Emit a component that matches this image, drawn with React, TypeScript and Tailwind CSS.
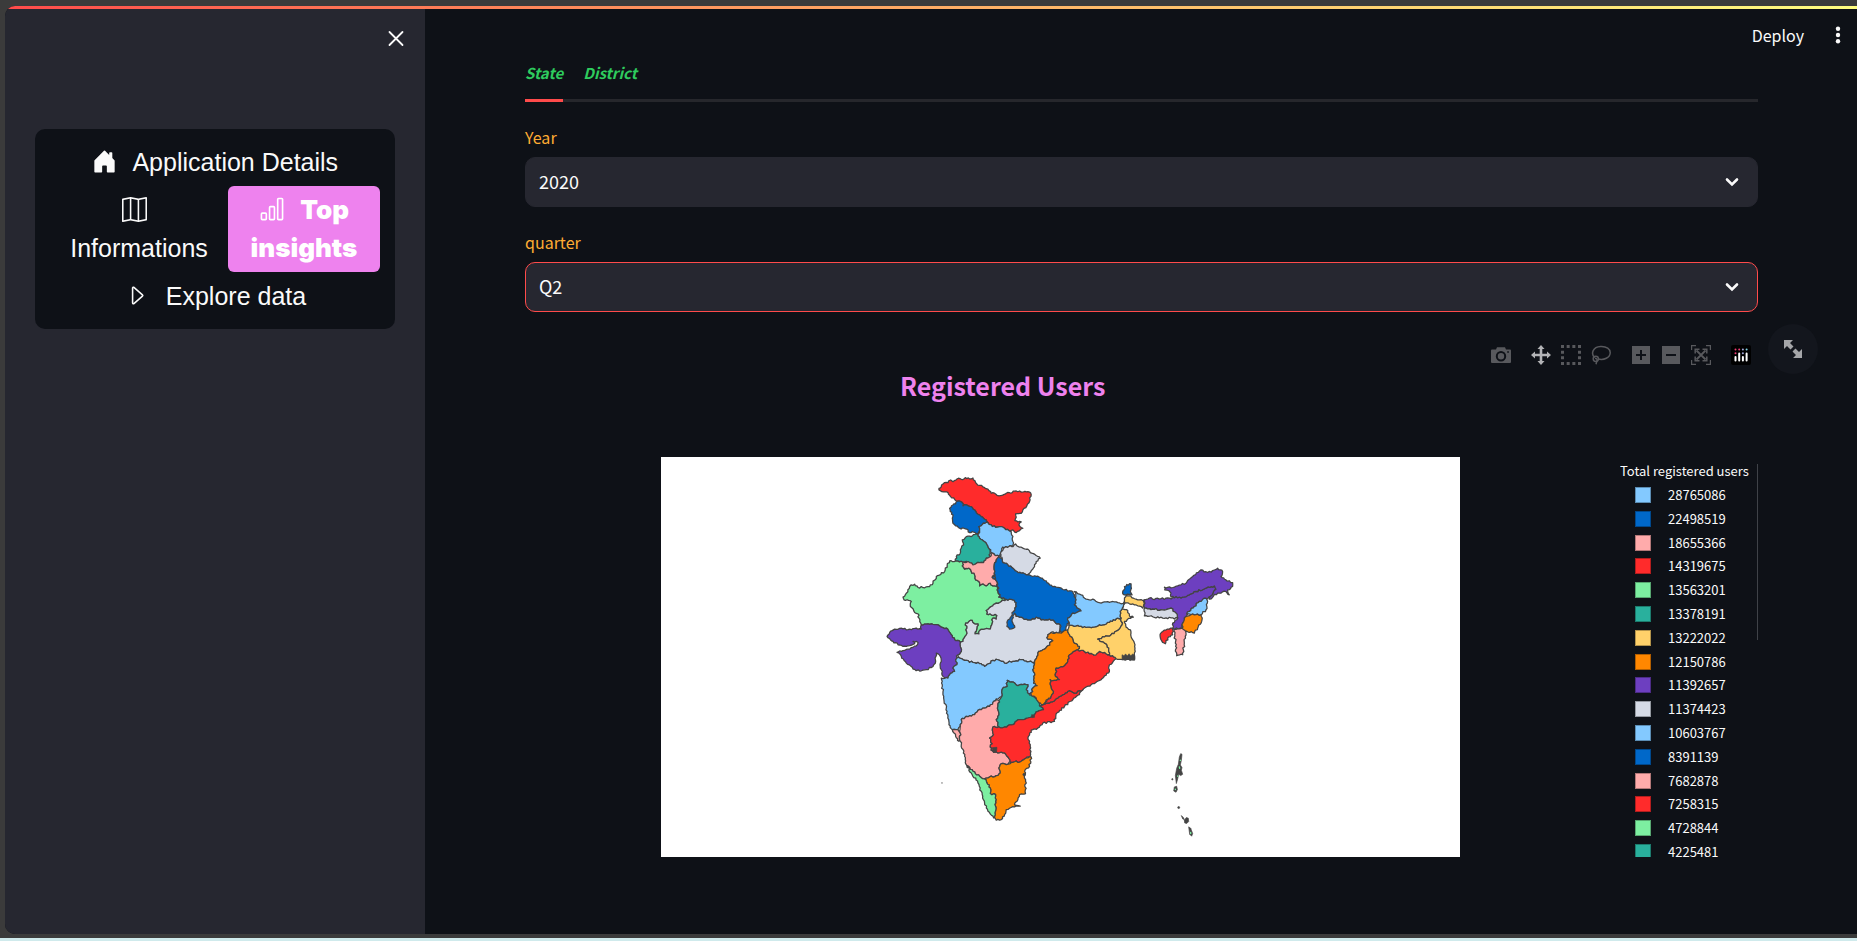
import React from "react";
import { BsBarChart, BsCaretRight, BsHouseDoorFill, BsMap } from "react-icons/bs";

const SKY = "#83c9ff";
const BLUE = "#0068c9";
const ROSE = "#ffabab";
const RED = "#ff2b2b";
const MINT = "#7defa1";
const TEAL = "#29b09d";
const SAND = "#ffd16a";
const ORANGE = "#ff8700";
const PURPLE = "#6d3fc0";
const GREY = "#d5dae5";

const legend: [string, string][] = [
  ["28765086", SKY],
  ["22498519", BLUE],
  ["18655366", ROSE],
  ["14319675", RED],
  ["13563201", MINT],
  ["13378191", TEAL],
  ["13222022", SAND],
  ["12150786", ORANGE],
  ["11392657", PURPLE],
  ["11374423", GREY],
  ["10603767", SKY],
  ["8391139", BLUE],
  ["7682878", ROSE],
  ["7258315", RED],
  ["4728844", MINT],
  ["4225481", TEAL],
];

const states: { name: string; fill: string; outline: string }[] = [
  { name: "Rajasthan", fill: MINT, outline: "258,303 285,306 278,318 285,328 298,325 305,335 315,345 318,360 330,368 330,378 340,372 350,378 362,370 370,378 382,380 385,395 392,405 388,412 410,418 395,425 380,430 365,440 350,452 352,463 365,465 382,467 380,478 370,475 368,490 362,508 345,508 330,512 328,522 316,522 322,505 325,492 312,490 308,482 298,485 288,490 292,505 290,525 280,545 272,548 255,540 242,520 230,505 215,502 205,495 185,492 155,495 148,475 145,462 135,458 122,440 125,425 103,420 100,412 110,400 120,380 135,373 145,383 180,380 190,370 200,350 225,335 240,303" },
  { name: "Ladakh", fill: RED, outline: "208,85 215,80 220,72 235,68 243,60 250,65 262,57 275,58 287,53 305,57 310,54 318,68 330,76 345,83 358,92 365,100 378,102 388,108 402,104 410,100 428,98 440,93 450,93 462,96 475,95 485,104 480,125 472,138 460,150 455,160 438,162 440,172 436,182 455,186 448,195 460,205 450,212 440,218 430,210 418,212 405,205 390,200 378,202 365,195 355,188 345,178 335,170 325,163 315,150 305,140 290,135 280,138 278,128 262,124 255,118 240,106 232,96 212,92" },
  { name: "Jammu & Kashmir", fill: BLUE, outline: "262,124 278,128 280,138 290,135 305,140 315,150 325,163 335,170 345,178 355,188 338,194 328,200 330,212 320,222 308,215 300,218 292,208 283,205 270,205 258,198 250,190 248,175 250,165 242,155 240,145 250,135 258,132" },
  { name: "Himachal Pradesh", fill: SKY, outline: "328,200 338,194 355,188 365,195 378,202 390,200 405,205 418,212 425,215 428,235 430,245 431,258 418,260 400,262 395,275 392,288 380,288 368,280 355,262 350,250 338,240 330,235 325,228 330,212" },
  { name: "Punjab", fill: TEAL, outline: "320,222 325,228 330,235 338,240 350,250 355,262 362,272 358,285 363,290 350,295 342,308 330,308 310,315 300,308 285,306 270,306 258,303 260,290 272,280 275,265 282,255 278,240 290,230 305,230 312,224" },
  { name: "Haryana", fill: ROSE, outline: "363,280 375,285 388,288 380,300 374,315 374,330 376,345 368,352 376,358 382,365 382,380 370,378 362,370 350,378 340,372 330,378 330,368 318,360 315,345 305,335 298,325 285,328 278,318 282,306 300,308 310,315 330,308 342,308 350,295 363,290" },
  { name: "Uttarakhand", fill: GREY, outline: "400,262 418,260 431,260 438,252 450,262 475,268 482,278 512,295 500,305 495,320 480,340 470,345 455,340 442,335 430,325 415,315 400,308 398,298 392,290" },
  { name: "Madhya Pradesh", fill: GREY, outline: "350,452 365,440 380,430 395,425 410,418 430,420 440,428 440,440 432,455 435,460 440,470 455,472 470,478 485,480 500,472 515,480 540,478 555,485 572,495 570,520 545,518 535,525 535,538 550,543 535,558 520,570 505,580 495,605 488,608 455,600 430,605 405,610 385,600 370,602 345,620 335,612 310,608 285,602 270,595 265,585 275,575 272,560 272,548 280,545 290,525 292,505 288,490 298,485 308,482 312,490 325,492 322,505 316,522 328,522 330,512 345,508 362,508 368,490 370,475 380,478 382,467 365,465 352,463" },
  { name: "Uttar Pradesh", fill: BLUE, outline: "388,290 398,298 400,308 415,315 430,325 442,335 455,340 470,345 490,350 510,352 525,362 540,375 560,382 585,390 610,395 615,405 620,420 615,435 635,453 610,460 595,475 598,490 590,500 588,515 575,518 572,495 555,485 540,478 515,480 500,472 485,480 470,478 455,472 440,470 435,460 430,468 430,490 435,498 432,505 420,508 412,500 412,488 420,478 425,470 432,455 440,440 440,428 430,420 410,418 388,412 392,405 385,395 388,385 382,378 382,365 376,358 368,352 376,345 374,330 374,315 380,300" },
  { name: "Gujarat", fill: PURPLE, outline: "155,495 185,492 205,495 215,502 230,505 242,520 255,540 272,548 272,560 275,575 265,585 258,600 262,615 250,625 255,635 240,645 235,655 220,650 218,635 212,625 215,605 212,590 200,580 198,605 190,620 170,630 150,634 130,628 110,610 95,590 82,578 95,575 120,568 140,558 145,548 130,545 135,552 115,558 100,560 85,555 70,545 52,530 60,518 75,508 100,507 120,508 140,505 155,508" },
  { name: "Maharashtra", fill: SKY, outline: "258,600 265,592 270,595 285,602 310,608 335,612 345,620 370,602 385,600 405,610 430,605 455,600 488,608 495,612 490,630 495,640 492,670 503,678 490,685 485,705 478,702 470,690 475,675 460,675 445,678 435,670 413,662 413,680 398,688 398,708 380,718 370,728 360,740 345,745 325,752 315,765 290,770 275,780 272,800 265,810 248,810 238,795 235,770 230,745 222,715 218,680 215,655 235,655 240,645 255,635 250,625 262,615" },
  { name: "Goa", fill: ROSE, outline: "248,810 265,810 272,820 270,840 268,845 258,830" },
  { name: "Karnataka", fill: ROSE, outline: "272,800 275,780 290,770 315,765 325,752 345,745 360,740 370,728 380,718 388,722 385,740 388,760 380,780 388,802 370,802 372,825 360,835 368,852 362,862 372,878 385,880 405,880 415,892 422,905 410,915 395,912 388,925 392,940 380,948 360,952 345,958 330,950 310,935 292,918 285,890 275,855 270,840 272,820" },
  { name: "Telangana", fill: TEAL, outline: "413,662 435,670 445,678 460,675 475,675 470,690 478,702 490,710 505,725 510,738 522,750 505,755 495,765 475,775 450,780 430,795 405,802 388,802 380,780 388,760 385,740 388,722 398,708 398,688 413,680" },
  { name: "Andhra Pradesh", fill: RED, outline: "388,802 405,802 430,795 450,780 475,775 495,765 505,755 522,750 510,738 520,735 540,730 565,715 580,705 600,693 615,700 640,690 630,705 610,720 585,740 560,762 555,785 520,790 505,805 490,810 480,820 475,835 482,860 482,890 470,895 455,905 430,908 422,912 422,905 415,892 405,880 385,880 372,878 362,862 368,852 360,835 372,825 370,802" },
  { name: "Tamil Nadu", fill: ORANGE, outline: "485,892 480,920 465,935 468,965 468,1002 450,1005 445,1020 435,1036 452,1040 435,1042 410,1050 405,1065 395,1080 380,1082 375,1070 378,1040 378,1005 362,1002 362,985 352,970 345,958 360,952 380,948 392,940 388,925 395,912 410,915 422,912 430,908 455,905 470,895" },
  { name: "Kerala", fill: MINT, outline: "292,918 310,935 330,950 345,958 352,970 362,985 362,1002 378,1005 378,1040 375,1070 372,1075 355,1055 345,1030 335,995 325,970 305,940" },
  { name: "Chhattisgarh", fill: ORANGE, outline: "595,510 575,520 545,518 535,525 535,538 550,543 535,558 520,570 505,580 495,605 495,612 490,630 495,640 492,670 503,678 490,685 485,705 500,715 515,735 525,730 545,710 552,695 545,680 542,660 555,662 570,660 558,650 560,625 585,618 595,605 600,585 625,570 630,560 615,550 600,525" },
  { name: "Odisha", fill: RED, outline: "600,585 625,570 645,575 680,585 690,575 720,585 740,597 720,615 720,635 695,660 665,675 640,690 615,700 600,693 580,705 565,715 540,730 520,735 545,710 552,695 545,680 542,660 555,662 570,660 558,650 560,625 585,618 595,605" },
  { name: "Jharkhand", fill: SAND, outline: "598,495 630,500 660,502 700,495 720,488 745,475 755,475 758,495 745,512 725,525 685,538 705,550 718,565 720,585 690,575 680,585 645,575 625,570 630,560 615,550 600,525 595,510" },
  { name: "West Bengal", fill: SAND, outline: "685,538 725,525 745,512 758,495 755,475 752,455 762,440 765,425 770,405 800,418 825,420 820,445 805,438 780,432 765,430 758,445 775,452 780,468 792,472 765,485 770,502 783,510 785,530 795,550 795,585 795,600 760,600 740,597 720,585 718,565 705,550" },
  { name: "Bihar", fill: SKY, outline: "615,395 635,405 650,418 675,420 695,430 730,425 755,432 765,425 762,440 752,455 755,475 745,475 720,488 700,495 660,502 630,500 598,495 595,475 610,460 635,453 615,435 620,420" },
  { name: "Sikkim", fill: BLUE, outline: "765,380 772,374 785,372 784,390 788,405 770,405 760,402" },
  { name: "Assam", fill: PURPLE, outline: "825,420 840,415 870,418 900,415 940,412 960,405 980,395 1035,378 1040,388 1025,410 1010,418 990,425 975,440 960,455 950,470 940,490 935,505 912,508 910,490 925,475 920,460 905,445 880,450 850,448 825,445" },
  { name: "Arunachal Pradesh", fill: PURPLE, outline: "885,382 905,384 925,378 950,370 970,350 995,330 1015,338 1030,332 1045,325 1060,335 1055,350 1070,360 1090,368 1090,380 1075,390 1080,405 1070,395 1045,400 1020,418 1040,388 1035,378 980,395 960,405 940,412 905,412 905,400 898,392 886,390" },
  { name: "Meghalaya", fill: GREY, outline: "825,445 850,448 880,450 905,445 920,460 925,475 880,475 825,468" },
  { name: "Nagaland", fill: SKY, outline: "1010,415 1015,425 1010,450 995,465 970,465 952,462 960,455 975,440 990,425" },
  { name: "Manipur", fill: ORANGE, outline: "945,475 965,465 995,465 998,480 985,505 975,520 938,512 940,490" },
  { name: "Mizoram", fill: ROSE, outline: "915,508 938,505 950,520 945,550 940,585 922,588 918,550" },
  { name: "Tripura", fill: RED, outline: "880,515 910,505 910,525 895,535 888,552 875,540 872,525" },
  { name: "Delhi", fill: BLUE, outline: "368,352 375,344 378,356 371,357" },
];

/* Stable pseudo random value in -1..1, so that neighbours share one border. */
function noise(x: number, y: number) {
  const value = Math.sin(x * 12.9898 + y * 78.233) * 43758.5453;
  return (value - Math.floor(value)) * 2 - 1;
}

/* Turns a coarse outline into a path with the small bends of a real border. */
function borderPath(outline: string) {
  const points = outline.split(" ").map((pair) => pair.split(",").map(Number));
  let path = "";
  points.forEach((from, index) => {
    const to = points[(index + 1) % points.length];
    const forward = from[0] < to[0] || (from[0] === to[0] && from[1] < to[1]);
    const a = forward ? from : to;
    const b = forward ? to : from;
    const dx = b[0] - a[0];
    const dy = b[1] - a[1];
    const length = Math.hypot(dx, dy) || 1;
    const steps = Math.max(1, Math.round(length / 5));
    const bends: string[] = [];
    for (let i = 1; i < steps; i += 1) {
      const t = i / steps;
      const x = a[0] + dx * t;
      const y = a[1] + dy * t;
      const offset = noise(x, y) * 2.8;
      bends.push(`${(x - (dy / length) * offset).toFixed(1)} ${(y + (dx / length) * offset).toFixed(1)}`);
    }
    if (!forward) bends.reverse();
    path += `${index === 0 ? "M" : "L"}${from[0]} ${from[1]}`;
    bends.forEach((bend) => {
      path += `L${bend}`;
    });
  });
  return `${path}Z`;
}

function IndiaMap() {
  return (
    <svg viewBox="-627 -9 2400 1200" className="block min-w-0 flex-1 bg-white" role="img" aria-label="Registered users by state">
      <g stroke="#444444" strokeWidth="3.8" strokeLinejoin="round">
        {states.map((state) => (
          <path key={state.name} d={borderPath(state.outline)} fill={state.fill} />
        ))}
        <g fill="#444444" strokeWidth="2">
          <path d="M758 585l6 4 4-6 6 5 5-6 5 6 6-5 6 4v14l-8-1-6 3-6-5-8 4-10-3z" />
          <path d="M934 882l-4 10-3 22-5 12-4 22 3 24 4-14 3-14 6 4 6-4-4-12 2-8-5-8 3-14 2-18z" />
          <path d="M915 982l7-2 2 10-4 8-7-4z" />
          <path d="M936 1068l6 6 3 6-5-2z" />
          <path d="M945 1082l6-8 6 2 1 10-6 6-6-2z" />
          <path d="M958 1102l6 4 6 16-3 8-6-6z" />
          <path d="M368 864l14-1-1 14-10-1z" />
          <path d="M486 765l8 1 1 7-8 1z" />
          <circle cx="909" cy="959" r="2" />
          <circle cx="928" cy="1044" r="3" />
          <circle cx="464" cy="945" r="4" />
          <circle cx="217" cy="970" r="2" stroke="none" />
        </g>
        <g stroke={MINT} strokeWidth="4" strokeLinecap="round">
          <path d="M933 902v1M930 922l1 4M925 949v1M918 989v1M964 1119v3" />
        </g>
      </g>
    </svg>
  );
}

function SelectBox({ id, label, options, focused }: { id: string; label: string; options: string[]; focused?: boolean }) {
  return (
    <div className="flex flex-col gap-[9px]">
      <label htmlFor={id} className="text-base leading-[22px] text-[#ffac33]">
        {label}
      </label>
      <div className="relative">
        <select
          id={id}
          className={
            focused
              ? "block h-[50px] w-full appearance-none rounded-[10px] border border-[#ff4b4b] bg-[#262730] px-[13px] pb-[3px] text-lg text-[#fafafa] outline-none"
              : "block h-[50px] w-full appearance-none rounded-[10px] border border-[#262730] bg-[#262730] px-[13px] pb-[3px] text-lg text-[#fafafa] outline-none"
          }
        >
          {options.map((option) => (
            <option key={option}>{option}</option>
          ))}
        </select>
        <svg viewBox="0 0 20 20" className="pointer-events-none absolute top-[15px] right-4 size-5" aria-hidden="true">
          <path d="M5 7.5l5 5 5-5" fill="none" stroke="#fafafa" strokeWidth="2.6" strokeLinecap="round" />
        </svg>
      </div>
    </div>
  );
}

function ModeButton({ label, children }: { label: string; children: React.ReactNode }) {
  return (
    <button type="button" aria-label={label} className="flex h-5 w-[30px] items-center justify-center">
      <svg viewBox="0 0 20 20" className="size-5">
        {children}
      </svg>
    </button>
  );
}

function ModeBar() {
  return (
    <div className="flex gap-[10px] text-[#58595d]">
      <ModeButton label="Download plot as a png">
        <path
          fill="currentColor"
          fillRule="evenodd"
          d="M0 5.5a1 1 0 0 1 1-1h4l1-2.3h8l1 2.3h4a1 1 0 0 1 1 1V17a1 1 0 0 1-1 1H1a1 1 0 0 1-1-1zM10 6a5.200 5.200 0 1 0 0 10.400A5.200 5.200 0 0 0 10 6zm0 2a3.200 3.200 0 1 1 0 6.400A3.200 3.200 0 0 1 10 8zm6.200-1.700v1.500h1.700V6.300z"
        />
      </ModeButton>
      <div className="flex">
        <ModeButton label="Pan">
          <path fill="#b3b4b7" d="M10 0l3.500 4h-2.200v4.700H16V6.500l4 3.500-4 3.500v-2.200h-4.700V16h2.200L10 20l-3.500-4h2.200v-4.700H4v2.200L0 10l4-3.500v2.200h4.700V4H6.500z" />
        </ModeButton>
        <ModeButton label="Box Select">
          <path fill="none" stroke="currentColor" strokeWidth="3" strokeDasharray="3 2.670" d="M0 1.500h20M0 18.500h20" />
          <path fill="none" stroke="currentColor" strokeWidth="3" strokeDasharray="3 2.670" d="M1.500 0v20M18.500 0v20" />
        </ModeButton>
        <ModeButton label="Lasso Select">
          <g fill="none" stroke="currentColor" strokeWidth="1.500">
            <path d="M3.600 12.500C-.5 8.500 2 2 9.500 1.500c6-.4 10 2.700 9.700 6.500-.3 4.500-6 7.500-12.200 6" />
            <circle cx="4.800" cy="13.800" r="2.600" />
            <path d="M4 13.200c2 .2 2.600 1.600 1.800 3.200L5 19.300" />
          </g>
        </ModeButton>
      </div>
      <div className="flex">
        <ModeButton label="Zoom in">
          <path fill="currentColor" fillRule="evenodd" d="M1 1h18v18H1zM9 5v4H5v2h4v4h2v-4h4V9h-4V5z" />
        </ModeButton>
        <ModeButton label="Zoom out">
          <path fill="currentColor" fillRule="evenodd" d="M1 1h18v18H1zM5 9v2h10V9z" />
        </ModeButton>
        <ModeButton label="Reset">
          <g fill="none" stroke="currentColor">
            <path strokeWidth="1.200" d="M.6 5V.6H5M15 .6h4.400V5M19.400 15v4.400H15M5 19.400H.6V15" />
            <path strokeWidth="1.800" d="M5.500 5.500l9 9M14.500 5.500l-9 9" />
            <path strokeWidth="1.500" d="M4.200 8.500V4.200h4.300M11.500 4.200h4.300v4.300M15.800 11.500v4.300h-4.300M8.500 15.800H4.200v-4.300" />
          </g>
        </ModeButton>
      </div>
      <ModeButton label="Produced with Plotly">
        <rect width="20" height="20" rx="2" fill="#000000" />
        <path stroke="#ffffff" strokeWidth="2" strokeLinecap="round" d="M4.500 12v3.500M8.200 8.500v7M11.900 12v3.500M15.600 8.500v7" />
        <g fill="#ef3b75">
          <circle cx="4.500" cy="4.500" r="1" />
          <circle cx="4.500" cy="8.200" r="1" />
          <circle cx="8.200" cy="4.500" r="1" />
        </g>
        <g fill="#a3a8d8">
          <circle cx="11.900" cy="4.500" r="1" />
          <circle cx="11.900" cy="8.200" r="1" />
        </g>
        <circle cx="15.600" cy="4.500" r="1" fill="#7fd8e8" />
      </ModeButton>
    </div>
  );
}

export default function App() {
  return (
    <div className="flex min-h-screen flex-col border-b-[3px] border-[#cfeaec] bg-[#3b3b3b] pt-[6px] pb-1 pl-[5px] font-['Noto_Sans_CJK_SC','Noto_Sans',sans-serif] text-[#fafafa]">
      <div className="flex flex-1 flex-col overflow-hidden rounded-l-[10px] bg-[#0e1117]">
        <div className="h-[3px] bg-gradient-to-r from-[#ff4b4b] to-[#fffd80]" />
        <div className="flex flex-1">
          <aside className="flex w-[420px] shrink-0 flex-col bg-[#262730] px-[30px] pt-5 font-['Liberation_Sans',Arial,sans-serif]">
            <button type="button" aria-label="Close sidebar" className="mr-[-11px] flex size-5 items-center justify-center self-end">
              <svg viewBox="0 0 20 20" className="size-5" fill="none" stroke="#fafafa" strokeWidth="1.800" strokeLinecap="round">
                <path d="M3.500 3l13 13M16.500 3l-13 13" />
              </svg>
            </button>
            <nav className="mt-20 rounded-[10px] bg-[#0e1117] px-[15px] py-[9px] text-center text-[25px] leading-[38px]">
              <a href="#details" className="block py-[5px]">
                <BsHouseDoorFill className="mr-[10px] inline align-[-3px]" /> Application Details
              </a>
              <div className="flex">
                <a href="#informations" className="flex-1 px-5 py-[5px]">
                  <BsMap className="mr-[10px] inline align-[-3px]" /> Informations
                </a>
                <a href="#insights" className="w-[152px] rounded-[6px] bg-[#ee82ee] px-5 py-[5px] font-['Inter',sans-serif] text-[26px] font-black text-white">
                  <BsBarChart className="mr-[10px] inline align-[-3px]" /> Top insights
                </a>
              </div>
              <a href="#explore" className="block py-[5px]">
                <BsCaretRight className="mr-[10px] inline align-[-3px]" /> Explore data
              </a>
            </nav>
          </aside>
          <main className="flex min-w-0 flex-1 flex-col">
            <header className="flex h-[52px] items-center justify-end gap-6 pr-[9px]">
              <button type="button" className="text-base leading-6">
                Deploy
              </button>
              <button type="button" aria-label="Main menu" className="flex size-5 items-center justify-center">
                <svg viewBox="0 0 20 20" className="size-5" fill="#fafafa">
                  <circle cx="10" cy="3.800" r="2.200" />
                  <circle cx="10" cy="10" r="2.200" />
                  <circle cx="10" cy="16.200" r="2.200" />
                </svg>
              </button>
            </header>
            <div className="flex flex-col gap-6 pr-[99px] pl-[100px]">
              <div role="tablist" className="flex gap-5 text-[15px] leading-6 font-bold text-[#2ecc5e] italic shadow-[inset_0_-3px_0_#26272c]">
                <button type="button" role="tab" aria-selected="true" className="border-b-[3px] border-[#ff4b4b] pb-[14px] italic">
                  State
                </button>
                <button type="button" role="tab" aria-selected="false" className="border-b-[3px] border-transparent pb-[14px] italic">
                  District
                </button>
              </div>
              <SelectBox id="year" label="Year" options={["2020", "2018", "2019", "2021", "2022"]} />
              <SelectBox id="quarter" label="quarter" options={["Q2", "Q1", "Q3", "Q4"]} focused />
            </div>
            <section className="relative mt-[33px] pr-[99px] pl-[100px]">
              <button
                type="button"
                aria-label="View fullscreen"
                className="absolute top-[-21px] right-[39px] flex size-[50px] items-center justify-center rounded-full bg-[#13161d]"
              >
                <svg viewBox="0 0 20 20" className="size-5" fill="#a5a6a9">
                  <path d="M1 1h9L7 4l3.500 3.500-3 3L4 7l-3 3zM19 19h-9l3-3-3.500-3.500 3-3L16 13l3-3z" />
                </svg>
              </button>
              <div className="flex justify-end pr-[2px]">
                <ModeBar />
              </div>
              <h2 className="pt-[3px] pl-[375px] text-[25px] leading-[34px] font-bold text-[#ee82ee]">Registered Users</h2>
              <div className="flex items-start pt-[55px] pl-[136px]">
                <IndiaMap />
                <div className="relative ml-[160px] h-[400px] w-[138px] shrink-0 overflow-hidden pt-1 text-[13px] leading-5">
                  <p className="whitespace-nowrap">Total registered users</p>
                  <ul className="flex h-[381px] flex-col justify-between pt-1 pl-[15px]">
                    {legend.map(([value, color]) => (
                      <li key={value} className="flex h-5 shrink-0 items-center gap-[17px]">
                        <span className="size-4 border border-black/30" style={{ backgroundColor: color }} />
                        <span>{value}</span>
                      </li>
                    ))}
                  </ul>
                  <div className="absolute top-[7px] right-0 h-44 w-px bg-[#3f4248]" />
                </div>
              </div>
            </section>
          </main>
        </div>
      </div>
    </div>
  );
}
